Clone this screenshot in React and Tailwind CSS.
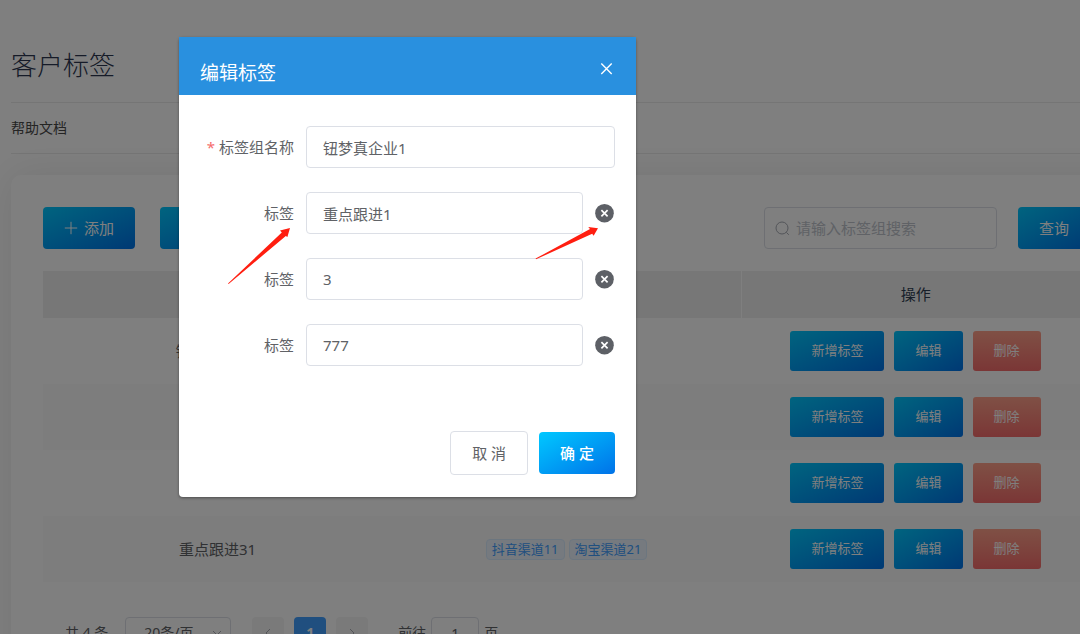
import React, { useState } from 'react';

const initialGroups = [
    { id: 1, name: "钮梦真企业1", tags: [] },
    { id: 2, name: "", tags: [] },
    { id: 3, name: "", tags: [] },
    { id: 4, name: "重点跟进31", tags: ["抖音渠道11", "淘宝渠道21"] },
];

const initialTags = [
    { id: 1, value: "重点跟进1" },
    { id: 2, value: "3" },
    { id: 3, value: "777" },
];

// Icons
const PlusIcon = () => (
    <svg viewBox="0 0 14 14" className="w-3.5 h-3.5" fill="none" stroke="currentColor" aria-hidden="true">
        <path d="M7 .8v12.4M.8 7h12.4" />
    </svg>
)

const SearchIcon = () => (
    <svg viewBox="0 0 15 15" className="w-[15px] h-[15px] text-[#a6aab2]" fill="none" stroke="currentColor" aria-hidden="true">
        <circle cx="7" cy="7" r="6" />
        <path d="M11.4 11.4L13.8 13.8" />
    </svg>
)

const CloseIcon = () => (
    <svg viewBox="0 0 16 16" className="w-4 h-4" fill="none" stroke="currentColor" strokeWidth="1.4" aria-hidden="true">
        <path d="M2.3 2.6l10.4 10.4M12.7 2.6L2.3 13" />
    </svg>
)

const RemoveIcon = () => (
    <svg viewBox="0 0 20 20" className="w-5 h-5" aria-hidden="true">
        <circle cx="9.5" cy="10.2" r="9.3" fill="#5d6066" />
        <path d="M6.4 7.1l6.2 6.2M12.6 7.1l-6.2 6.2" stroke="#fff" strokeWidth="1.7" />
    </svg>
)

const Chevron = ({ d }) => (
    <svg viewBox="0 0 12 12" className="w-3 h-3" fill="none" stroke="currentColor" aria-hidden="true">
        <path d={d} />
    </svg>
)

const TagTable = ({ groups }) => {
    return (
        <table className="w-full table-fixed border-collapse text-center text-[15px] text-[#606266]">
            <thead>
                <tr className="h-[47px] bg-[#eeeeee] text-[#303e52]">
                    <th className="font-normal"></th>
                    <th className="font-normal border-r border-white"></th>
                    <th className="font-normal">操作</th>
                </tr>
            </thead>
            <tbody>
                {
                    groups.map(group => (
                        <tr key={group.id} className="h-[66px] even:bg-[#fafafa]">
                            <td>{group.name}</td>
                            <td>
                                <div className="flex justify-center gap-1">
                                    {
                                        group.tags.map(tag => (
                                            <span key={tag} className="rounded border border-[#d9ecff] bg-[#ecf5ff] px-[5px] text-[13px] leading-[19px] text-[#409eff]">
                                                {tag}
                                            </span>
                                        ))
                                    }
                                </div>
                            </td>
                            <td>
                                <div className="flex justify-center gap-2.5 text-[13px] text-white">
                                    <button type="button" className="h-10 rounded-[3px] bg-linear-to-br from-[#00c8ff] to-[#0072e8] px-[21px]">新增标签</button>
                                    <button type="button" className="h-10 rounded-[3px] bg-linear-to-br from-[#00c8ff] to-[#0072e8] px-[21px]">编辑</button>
                                    <button type="button" className="h-10 rounded-[3px] bg-linear-to-b from-[#ffa18b] to-[#f56c6c] px-[21px]">删除</button>
                                </div>
                            </td>
                        </tr>
                    ))
                }
            </tbody>
        </table>
    )
}

const Pagination = ({ total }) => {
    return (
        <nav className="mt-[35px] flex items-center pl-[22px] text-sm text-[#606266]">
            <span>共 {total} 条</span>
            <div className="relative ml-[17px]">
                <select aria-label="每页条数" className="h-8 w-[106px] appearance-none rounded border border-[#dcdfe6] pl-[18px]">
                    <option>20条/页</option>
                </select>
                <span className="pointer-events-none absolute right-2 top-2.5 text-[#a8abb2]">
                    <Chevron d="M2 4l4 4 4-4" />
                </span>
            </div>
            <div className="ml-[21px] flex gap-2.5">
                <button type="button" aria-label="上一页" className="flex h-8 w-8 items-center justify-center rounded-sm bg-[#f4f4f5] text-[#a8abb2]">
                    <Chevron d="M8 2L4 6l4 4" />
                </button>
                <button type="button" className="h-8 w-8 rounded-sm bg-[#409eff] font-bold text-white">1</button>
                <button type="button" aria-label="下一页" className="flex h-8 w-8 items-center justify-center rounded-sm bg-[#f4f4f5] text-[#a8abb2]">
                    <Chevron d="M4 2l4 4-4 4" />
                </button>
            </div>
            <label className="ml-[30px] flex items-center gap-[5px]">
                前往
                <input type="text" defaultValue="1" className="h-8 w-12 rounded border border-[#dcdfe6] text-center" />
                页
            </label>
        </nav>
    )
}

const EditDialog = () => {
    const [name, setName] = useState("钮梦真企业1");
    const [tags, setTags] = useState(initialTags);

    // Handle tag change
    const handleTagChange = (id, value) => {
        setTags(prev => prev.map(tag => tag.id === id ? { ...tag, value } : tag));
    }

    // Remove a tag row
    const handleRemove = (id) => {
        setTags(prev => prev.filter(tag => tag.id !== id));
    }

    return (
        <div role="dialog" aria-labelledby="dialog-title" className="relative w-[457px] rounded-sm bg-white text-[15px] text-[#606266] shadow-[0_1px_3px_rgba(0,0,0,0.4)]">
            <div className="flex h-[58px] items-start justify-between bg-[#2990df] px-[21px] text-white">
                <h2 id="dialog-title" className="mt-6 text-[19px] leading-6">编辑标签</h2>
                <button type="button" aria-label="关闭" className="mt-6">
                    <CloseIcon />
                </button>
            </div>
            <form className="px-[21px] pb-[22px] pt-[31px]" onSubmit={(e) => e.preventDefault()}>
                <div className="flex flex-col gap-6">
                    <div className="flex items-center">
                        <label htmlFor="group-name" className="w-[106px] shrink-0 pr-3 text-right">
                            <span className="mr-1 text-[#f56c6c]">*</span>标签组名称
                        </label>
                        <input
                            type="text"
                            id="group-name"
                            value={name}
                            onChange={(e) => setName(e.target.value)}
                            className="h-[42px] min-w-0 flex-1 rounded border border-[#dcdfe6] px-4"
                        />
                    </div>
                    {
                        tags.map(tag => (
                            <div key={tag.id} className="flex items-center">
                                <label htmlFor={`tag-${tag.id}`} className="w-[106px] shrink-0 pr-3 text-right">标签</label>
                                <input
                                    type="text"
                                    id={`tag-${tag.id}`}
                                    value={tag.value}
                                    onChange={(e) => handleTagChange(tag.id, e.target.value)}
                                    className="h-[42px] min-w-0 flex-1 rounded border border-[#dcdfe6] px-4"
                                />
                                <button type="button" aria-label="移除标签" onClick={() => handleRemove(tag.id)} className="ml-3">
                                    <RemoveIcon />
                                </button>
                            </div>
                        ))
                    }
                </div>
                <div className="mt-[65px] flex items-center justify-end gap-[11px]">
                    <button type="button" className="h-11 rounded border border-[#dcdfe6] px-[21px]">取 消</button>
                    <button type="submit" className="h-[42px] rounded bg-linear-to-br from-[#00c8ff] to-[#0072e8] px-[21px] font-medium text-white">确 定</button>
                </div>
            </form>

            {/* Pointer arrows */}
            <svg viewBox="0 0 64 58" className="pointer-events-none absolute left-12 top-[190px] h-[58px] w-16" fill="#ff1e10" aria-hidden="true">
                <path d="M1 56.5L54.8 5.4L53 3.4L63 1L60.4 10L58.8 9L1.6 57z" />
            </svg>
            <svg viewBox="0 0 64 34" className="pointer-events-none absolute left-[356px] top-[189px] h-[34px] w-16" fill="#ff1e10" aria-hidden="true">
                <path d="M0.6 32.6L55 2.9L53.2 1.1L63 2.3L58.6 9.8L57.2 7.8L1 33.3z" />
            </svg>
        </div>
    )
}

const App = () => {
    return (
        <div className="relative h-screen overflow-hidden bg-white font-['Noto_Sans','Noto_Sans_CJK_SC',sans-serif]">
            <main className="-mr-[42px] pl-[11px] pt-[45px]">
                <h1 className="mb-[17px] text-[26px] font-light leading-10 text-[#2c3650]">客户标签</h1>
                <div className="flex h-[52px] items-center border-y border-[#ebebeb]">
                    <a href="#help" className="text-sm text-[#484848]">帮助文档</a>
                </div>
                <section className="mt-[21px] min-h-screen rounded-[10px] bg-white p-8 shadow-[0_0_40px_rgba(0,0,0,0.09)]">
                    <div className="mb-[22px] flex items-center text-[15px]">
                        <button type="button" className="flex h-[42px] items-center gap-1.5 rounded bg-linear-to-br from-[#00c8ff] to-[#0072e8] px-[21px] text-white">
                            <PlusIcon />
                            添加
                        </button>
                        <button type="button" aria-label="更多操作" className="ml-[25px] h-[42px] w-[92px] rounded bg-linear-to-br from-[#00c8ff] to-[#0072e8]"></button>
                        <label className="ml-auto flex h-[42px] w-[233px] items-center gap-1.5 rounded border border-[#dcdfe6] px-2.5">
                            <SearchIcon />
                            <input type="text" aria-label="搜索标签组" placeholder="请输入标签组搜索" className="min-w-0 flex-1 outline-none placeholder:text-[#c0c4cc]" />
                        </label>
                        <button type="button" className="ml-[21px] h-[42px] rounded bg-linear-to-br from-[#00c8ff] to-[#0072e8] px-[21px] text-white">查询</button>
                    </div>
                    <TagTable groups={initialGroups} />
                    <Pagination total={initialGroups.length} />
                </section>
            </main>

            {/* Dialog mask */}
            <div className="absolute inset-0 flex items-start bg-black/50 pl-[179px] pt-[37px]">
                <EditDialog />
            </div>
        </div>
    )
}

export default App;
